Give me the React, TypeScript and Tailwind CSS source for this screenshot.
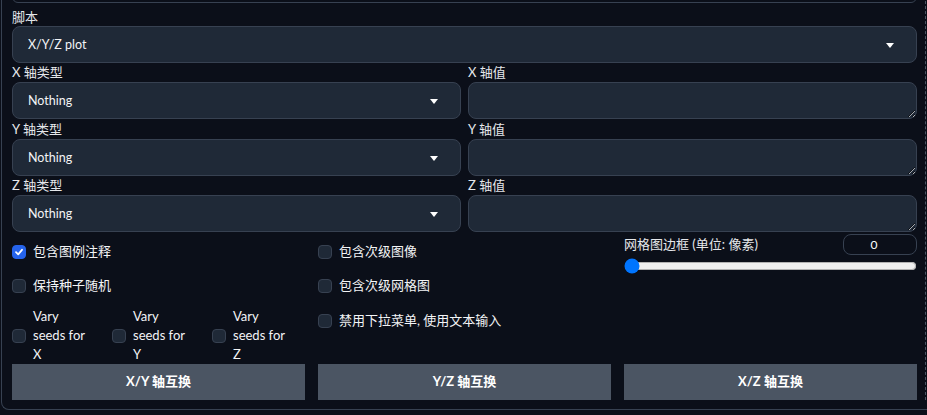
import { useState } from "react";

const font = "font-['Lato','Noto_Sans_CJK_SC',sans-serif]";

function Dropdown({ value }: { value: string }) {
  return (
    <div className="flex h-[37px] items-center justify-between rounded-lg border border-[#374151] bg-[#1f2937] pl-[15px] pr-[22px] pt-[2px] text-[12.5px] text-[#f3f4f6]">
      <span>{value}</span>
      <svg width="8" height="5" viewBox="0 0 8 5">
        <path d="M0 0h8L4 5z" fill="#fff" />
      </svg>
    </div>
  );
}

function Box({ checked }: { checked?: boolean }) {
  return (
    <span
      className={`flex h-[14px] w-[14px] shrink-0 items-center justify-center rounded-[4px] border ${
        checked ? "border-[#2563eb] bg-[#2563eb]" : "border-[#374151] bg-[#1f2937]"
      }`}
    >
      {checked && (
        <svg width="10" height="10" viewBox="0 0 10 10">
          <path d="M2 5.2 4.2 7.3 8 2.8" fill="none" stroke="#fff" strokeWidth="1.8" strokeLinecap="round" strokeLinejoin="round" />
        </svg>
      )}
    </span>
  );
}

function Check({ label, checked }: { label: string; checked?: boolean }) {
  return (
    <div className="flex h-[20px] items-center gap-[7px] text-[13px] text-[#f3f4f6]">
      <Box checked={checked} />
      <span>{label}</span>
    </div>
  );
}

function Vary({ axis }: { axis: string }) {
  return (
    <div className="flex w-[100px] shrink-0 items-center gap-[7px]">
      <Box />
      <span className="w-[56px] text-[13px] leading-[19px] text-[#f3f4f6]">Vary seeds for {axis}</span>
    </div>
  );
}

export default function App() {
  const [border, setBorder] = useState(0);
  const axes = [
    { name: "X", h: "h-[19px] leading-[19px]" },
    { name: "Y", h: "h-[20px] leading-[20px]" },
    { name: "Z", h: "h-[19px] leading-[19px]" },
  ];
  return (
    <div className={`h-[415px] w-[927px] overflow-hidden bg-[#0b0f19] ${font}`}>
      <div className="ml-px w-[926px] rounded-bl-lg border-b border-l border-[#374151] pb-[9px]">
        <div className="w-[924px] border-r border-dashed border-[#4b5563] pl-[10px] pr-[8px]">
          {/* tail of the block above */}
          <div className="-mt-[9px] h-[12px] rounded-lg border border-[#374151] bg-[#0b0f19]" />

          <div className="mt-[5px] h-[18px] text-[13px] leading-[18px] text-[#e5e7eb]">脚本</div>
          <Dropdown value="X/Y/Z plot" />

          {axes.map((a) => (
            <div key={a.name} className="grid grid-cols-2 gap-[7px]">
              <div>
                <div className={`${a.h} text-[13px] text-[#e5e7eb]`}>{a.name} 轴类型</div>
                <Dropdown value="Nothing" />
              </div>
              <div className="flex flex-col">
                <div className={`${a.h} text-[13px] text-[#e5e7eb]`}>{a.name} 轴值</div>
                <textarea className="block h-[37px] w-full resize-y rounded-lg border border-[#374151] bg-[#1f2937] px-3 text-[12px] text-white outline-none scheme-dark" />
              </div>
            </div>
          ))}

          <div className="grid h-[132px] grid-cols-3 gap-x-[13px]">
            <div className="pt-[10px]">
              <Check label="包含图例注释" checked />
              <div className="mt-[14px]">
                <Check label="保持种子随机" />
              </div>
              <div className="mt-[11px] flex">
                <Vary axis="X" />
                <Vary axis="Y" />
                <Vary axis="Z" />
              </div>
            </div>
            <div className="pt-[10px]">
              <Check label="包含次级图像" />
              <div className="mt-[14px]">
                <Check label="包含次级网格图" />
              </div>
              <div className="mt-[15px]">
                <Check label="禁用下拉菜单, 使用文本输入" />
              </div>
            </div>
            <div className="pt-[2px]">
              <div className="flex h-[21px] items-center justify-between">
                <span className="text-[13px] text-[#e5e7eb]">网格图边框 (单位: 像素)</span>
                <input
                  type="number"
                  value={border}
                  onChange={(e) => setBorder(Number(e.target.value))}
                  className="h-[21px] w-[74px] rounded-lg border border-[#374151] bg-[#0b0f19] pr-[12px] text-center text-[12px] text-white outline-none [appearance:textfield] [&::-webkit-inner-spin-button]:appearance-none"
                />
              </div>
              <input
                type="range"
                min={0}
                max={200}
                value={border}
                onChange={(e) => setBorder(Number(e.target.value))}
                className="mt-[3px] block w-full"
              />
            </div>
          </div>

          <div className="grid grid-cols-3 gap-x-[13px]">
            {["X/Y 轴互换", "Y/Z 轴互换", "X/Z 轴互换"].map((t) => (
              <button key={t} className="h-[36px] bg-[#4b5563] text-[13px] font-bold text-white">
                {t}
              </button>
            ))}
          </div>
        </div>
      </div>
    </div>
  );
}
